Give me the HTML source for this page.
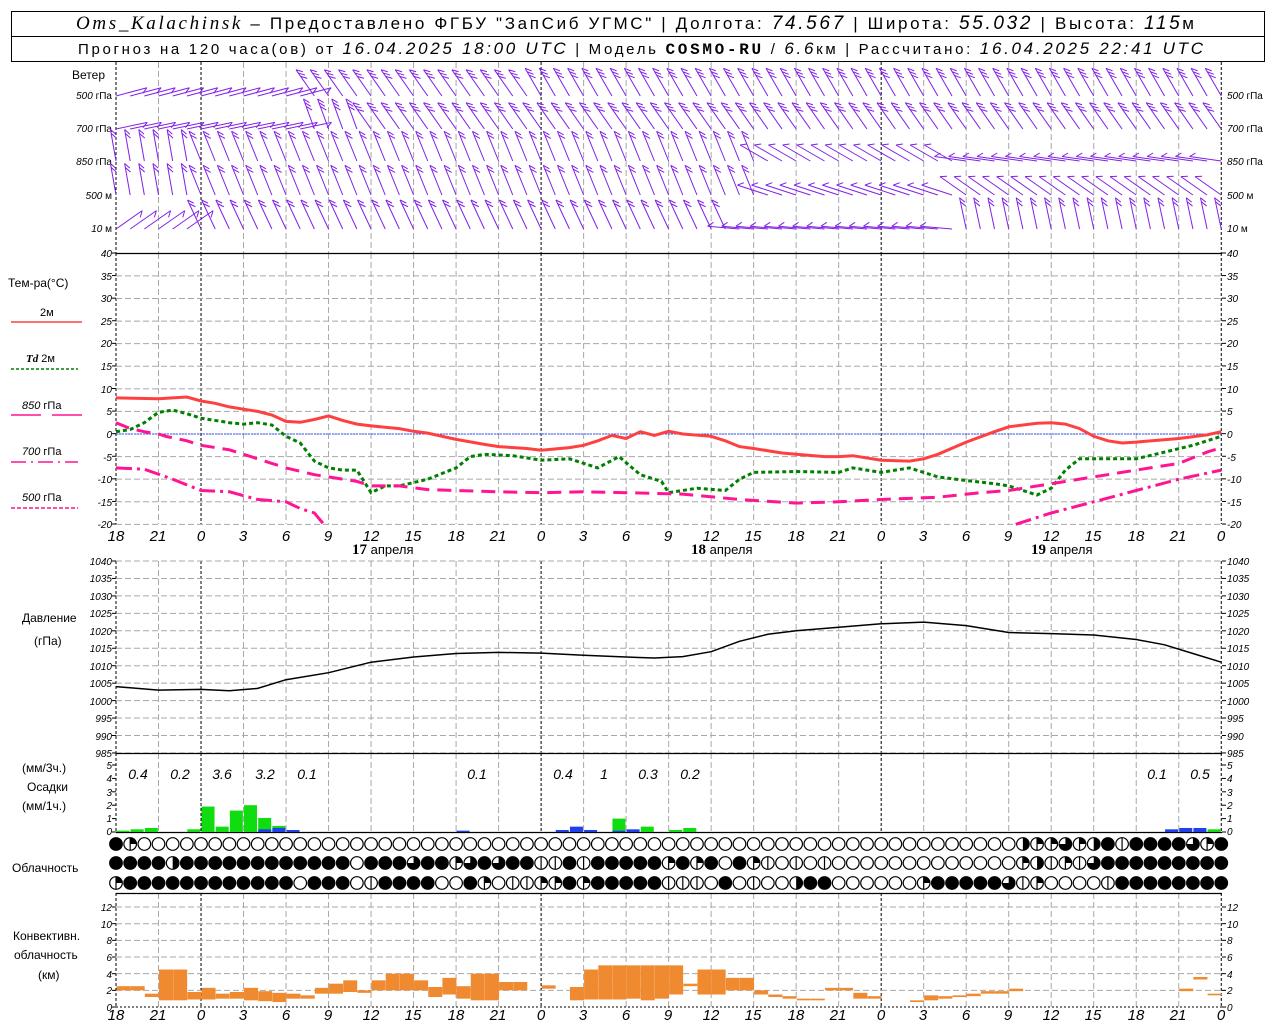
<!DOCTYPE html>
<html><head><meta charset="utf-8"><style>
html,body{margin:0;padding:0;background:#fff;width:1280px;height:1024px;overflow:hidden}
svg{display:block}
text{font-family:"Liberation Sans",sans-serif;fill:#000}
.ax{font-size:10px;font-style:italic}
.lb{font-size:12px}
.xl{font-size:15px;font-style:italic}
</style></head><body>
<svg id="s" width="1280" height="1024" viewBox="0 0 1280 1024" xmlns="http://www.w3.org/2000/svg">
<rect x="11.5" y="11.5" width="1253" height="50" fill="none" stroke="#000"/>
<line x1="11" y1="36.5" x2="1265" y2="36.5" stroke="#000"/>
<text x="76" y="29" font-size="17" textLength="1118" lengthAdjust="spacing"><tspan font-family="Liberation Serif" font-style="italic" font-size="19">Oms_Kalachinsk</tspan> – Предоставлено ФГБУ "ЗапСиб УГМС" | Долгота: <tspan font-style="italic" font-size="19">74.567</tspan> | Широта: <tspan font-style="italic" font-size="19">55.032</tspan> | Высота: <tspan font-style="italic" font-size="19">115</tspan>м</text>
<text x="78" y="54" font-size="15" textLength="1125" lengthAdjust="spacing">Прогноз на 120 часа(ов) от <tspan font-style="italic" font-size="17">16.04.2025 18:00 UTC</tspan> | Модель <tspan font-family="Liberation Mono" font-weight="bold" font-size="16">COSMO-RU</tspan> / <tspan font-style="italic" font-size="17">6.6</tspan>км | Рассчитано: <tspan font-style="italic" font-size="17">16.04.2025 22:41 UTC</tspan></text>

<g class="lb">
<text x="72" y="79">Ветер</text>
<text x="112" y="99" text-anchor="end" font-size="10"><tspan font-style="italic">500</tspan> гПа</text>
<text x="112" y="132" text-anchor="end" font-size="10"><tspan font-style="italic">700</tspan> гПа</text>
<text x="112" y="165" text-anchor="end" font-size="10"><tspan font-style="italic">850</tspan> гПа</text>
<text x="112" y="199" text-anchor="end" font-size="10"><tspan font-style="italic">500</tspan> м</text>
<text x="112" y="232" text-anchor="end" font-size="10"><tspan font-style="italic">10</tspan>   м</text>
<text x="1227" y="99" font-size="10"><tspan font-style="italic">500</tspan> гПа</text>
<text x="1227" y="132" font-size="10"><tspan font-style="italic">700</tspan> гПа</text>
<text x="1227" y="165" font-size="10"><tspan font-style="italic">850</tspan> гПа</text>
<text x="1227" y="199" font-size="10"><tspan font-style="italic">500</tspan> м</text>
<text x="1227" y="232" font-size="10"><tspan font-style="italic">10</tspan>   м</text>
<text x="8" y="287">Тем-ра(°С)</text>
<text x="40" y="316" font-size="11">2м</text>
<text x="26" y="362" font-size="11"><tspan font-style="italic" font-weight="bold" font-family="Liberation Serif">Td</tspan>  2м</text>
<text x="22" y="409" font-size="11"><tspan font-style="italic">850</tspan>  гПа</text>
<text x="22" y="455" font-size="11"><tspan font-style="italic">700</tspan>  гПа</text>
<text x="22" y="501" font-size="11"><tspan font-style="italic">500</tspan>  гПа</text>
<text x="22" y="622">Давление</text>
<text x="34" y="645">(гПа)</text>
<text x="22" y="772">(мм/3ч.)</text>
<text x="27" y="791">Осадки</text>
<text x="22" y="810">(мм/1ч.)</text>
<text x="12" y="872">Облачность</text>
<text x="13" y="940">Конвективн.</text>
<text x="14" y="959">облачность</text>
<text x="38" y="979">(км)</text>
<text x="352" y="554" font-size="13"><tspan font-weight="bold" font-family="Liberation Serif" font-size="15">17</tspan> апреля</text>
<text x="691" y="554" font-size="13"><tspan font-weight="bold" font-family="Liberation Serif" font-size="15">18</tspan> апреля</text>
<text x="1031" y="554" font-size="13"><tspan font-weight="bold" font-family="Liberation Serif" font-size="15">19</tspan> апреля</text>
</g>
<g stroke-width="1.5">
<line x1="11" y1="322" x2="82" y2="322" stroke="#ff4040"/>
<line x1="11" y1="369" x2="78" y2="369" stroke="#008000" stroke-dasharray="3,2"/>
<line x1="11" y1="415" x2="41" y2="415" stroke="#ff1493"/><line x1="52" y1="415" x2="82" y2="415" stroke="#ff1493"/>
<line x1="11" y1="462" x2="78" y2="462" stroke="#ff1493" stroke-dasharray="15,5,2,5"/>
<line x1="11" y1="508" x2="78" y2="508" stroke="#ff1493" stroke-dasharray="4,2"/>
</g>
<g id="g"></g>
<g class="ax">
<text x="112" y="257" text-anchor="end">40</text><text x="112" y="280" text-anchor="end">35</text><text x="112" y="302" text-anchor="end">30</text><text x="112" y="325" text-anchor="end">25</text><text x="112" y="347" text-anchor="end">20</text><text x="112" y="370" text-anchor="end">15</text><text x="112" y="393" text-anchor="end">10</text><text x="112" y="415" text-anchor="end">5</text><text x="112" y="438" text-anchor="end">0</text><text x="112" y="461" text-anchor="end">-5</text><text x="112" y="483" text-anchor="end">-10</text><text x="112" y="506" text-anchor="end">-15</text><text x="112" y="528" text-anchor="end">-20</text>
<text x="1227" y="257">40</text><text x="1227" y="280">35</text><text x="1227" y="302">30</text><text x="1227" y="325">25</text><text x="1227" y="347">20</text><text x="1227" y="370">15</text><text x="1227" y="393">10</text><text x="1227" y="415">5</text><text x="1227" y="438">0</text><text x="1227" y="461">-5</text><text x="1227" y="483">-10</text><text x="1227" y="506">-15</text><text x="1227" y="528">-20</text>
<text x="112" y="565" text-anchor="end">1040</text><text x="112" y="582" text-anchor="end">1035</text><text x="112" y="600" text-anchor="end">1030</text><text x="112" y="617" text-anchor="end">1025</text><text x="112" y="635" text-anchor="end">1020</text><text x="112" y="652" text-anchor="end">1015</text><text x="112" y="670" text-anchor="end">1010</text><text x="112" y="687" text-anchor="end">1005</text><text x="112" y="705" text-anchor="end">1000</text><text x="112" y="722" text-anchor="end">995</text><text x="112" y="740" text-anchor="end">990</text><text x="112" y="757" text-anchor="end">985</text>
<text x="1227" y="565">1040</text><text x="1227" y="582">1035</text><text x="1227" y="600">1030</text><text x="1227" y="617">1025</text><text x="1227" y="635">1020</text><text x="1227" y="652">1015</text><text x="1227" y="670">1010</text><text x="1227" y="687">1005</text><text x="1227" y="705">1000</text><text x="1227" y="722">995</text><text x="1227" y="740">990</text><text x="1227" y="757">985</text>
<text x="112" y="769" text-anchor="end">5</text><text x="112" y="782" text-anchor="end">4</text><text x="112" y="796" text-anchor="end">3</text><text x="112" y="809" text-anchor="end">2</text><text x="112" y="822" text-anchor="end">1</text><text x="112" y="835" text-anchor="end">0</text>
<text x="1227" y="769">5</text><text x="1227" y="782">4</text><text x="1227" y="796">3</text><text x="1227" y="809">2</text><text x="1227" y="822">1</text><text x="1227" y="835">0</text>
<text x="112" y="911" text-anchor="end">12</text><text x="112" y="928" text-anchor="end">10</text><text x="112" y="944" text-anchor="end">8</text><text x="112" y="961" text-anchor="end">6</text><text x="112" y="978" text-anchor="end">4</text><text x="112" y="994" text-anchor="end">2</text><text x="112" y="1011" text-anchor="end">0</text>
<text x="1227" y="911">12</text><text x="1227" y="928">10</text><text x="1227" y="944">8</text><text x="1227" y="961">6</text><text x="1227" y="978">4</text><text x="1227" y="994">2</text><text x="1227" y="1011">0</text>
</g>
<g class="xl" text-anchor="middle">
<text x="116" y="541">18</text><text x="158" y="541">21</text><text x="201" y="541">0</text><text x="243" y="541">3</text><text x="286" y="541">6</text><text x="328" y="541">9</text><text x="371" y="541">12</text><text x="413" y="541">15</text><text x="456" y="541">18</text><text x="498" y="541">21</text><text x="541" y="541">0</text><text x="583" y="541">3</text><text x="626" y="541">6</text><text x="668" y="541">9</text><text x="711" y="541">12</text><text x="753" y="541">15</text><text x="796" y="541">18</text><text x="838" y="541">21</text><text x="881" y="541">0</text><text x="923" y="541">3</text><text x="966" y="541">6</text><text x="1008" y="541">9</text><text x="1051" y="541">12</text><text x="1093" y="541">15</text><text x="1136" y="541">18</text><text x="1178" y="541">21</text><text x="1221" y="541">0</text>
<text x="116" y="1020">18</text><text x="158" y="1020">21</text><text x="201" y="1020">0</text><text x="243" y="1020">3</text><text x="286" y="1020">6</text><text x="328" y="1020">9</text><text x="371" y="1020">12</text><text x="413" y="1020">15</text><text x="456" y="1020">18</text><text x="498" y="1020">21</text><text x="541" y="1020">0</text><text x="583" y="1020">3</text><text x="626" y="1020">6</text><text x="668" y="1020">9</text><text x="711" y="1020">12</text><text x="753" y="1020">15</text><text x="796" y="1020">18</text><text x="838" y="1020">21</text><text x="881" y="1020">0</text><text x="923" y="1020">3</text><text x="966" y="1020">6</text><text x="1008" y="1020">9</text><text x="1051" y="1020">12</text><text x="1093" y="1020">15</text><text x="1136" y="1020">18</text><text x="1178" y="1020">21</text><text x="1221" y="1020">0</text>
</g>
<g font-size="14" font-style="italic" text-anchor="middle">
<text x="138" y="779">0.4</text><text x="180" y="779">0.2</text><text x="222" y="779">3.6</text><text x="265" y="779">3.2</text><text x="307" y="779">0.1</text><text x="477" y="779">0.1</text><text x="563" y="779">0.4</text><text x="604" y="779">1</text><text x="648" y="779">0.3</text><text x="690" y="779">0.2</text><text x="1157" y="779">0.1</text><text x="1200" y="779">0.5</text>
</g>
</svg>
<script>
var NS="http://www.w3.org/2000/svg",G=document.getElementById("g");
function el(n,a){var e=document.createElementNS(NS,n);for(var k in a)e.setAttribute(k,a[k]);G.appendChild(e);return e;}
function X(h){return 116+h*14.17;}
function ln(x1,y1,x2,y2,c,w,d){var a={x1:x1,y1:y1,x2:x2,y2:y2,stroke:c,"stroke-width":w||1};if(d)a["stroke-dasharray"]=d;el("line",a);}
var GR="#a8a8a8";
function vgrid(y1,y2){for(var h=0;h<=78;h+=3){var day=(h-6)%24==0;ln(X(h),y1,X(h),y2,day||h==0||h==78?"#000":GR,1,day||h==0||h==78?"3,2":"6,3");}}
vgrid(62,253);vgrid(253,524);vgrid(561,753);vgrid(753,832);vgrid(893,1007);
for(var t=-20;t<=35;t+=5){var y=434-t*4.517;ln(116,y,1222,y,GR,1,"6,3");}
for(var p=985;p<=1040;p+=5){var y=561+(1040-p)*3.49;ln(116,y,1222,y,GR,1,"6,3");}
for(var k=1;k<=6;k++){var y=1007-k*2*8.33;ln(116,y,1222,y,GR,1,"6,3");}
ln(116,1007,1222,1007,"#000",1,"2,2");
ln(116,253.5,1222,253.5,"#000",1.3);ln(116,753.5,1222,753.5,"#000",1.3);ln(116,832.5,1222,832.5,"#000",1.3);ln(116,893.5,1222,893.5,"#000",1.3);
ln(116,434,1222,434,"#3050ff",1,"2,1");
[[253,524,22.585],[561,753,17.45],[765,832,13.4],[907,1007,16.67]].forEach(function(r){for(var y=r[0];y<=r[1]+1;y+=r[2]){ln(112,y,116,y,"#000");ln(1222,y,1226,y,"#000");}});
function path(pts,c,w,d){var s="";pts.forEach(function(p,i){s+=(i?"L":"M")+X(p[0]).toFixed(1)+","+p[1].toFixed(1);});var a={d:s,fill:"none",stroke:c,"stroke-width":w};if(d)a["stroke-dasharray"]=d;el("path",a);}
function T(a){return a.map(function(p){return [p[0],434-p[1]*4.517];});}
path(T([[0,8],[3,7.8],[4,8],[5,8.2],[6,7.3],[7,6.8],[8,6],[9,5.5],[10,5],[11,4.2],[12,2.8],[13,2.6],[14,3.2],[15,4],[16,3],[17,2.2],[18,1.8],[20,1.2],[21,0.6],[22,0.2],[24,-1.2],[26,-2.3],[27,-2.8],[29,-3.2],[30,-3.6],[32,-3],[33,-2.5],[34,-1.5],[35,-0.3],[36,-1],[37,0.5],[38,-0.3],[39,0.6],[40,0],[42,-0.5],[43,-1.5],[44,-2.8],[45,-3.2],[47,-4.2],[48,-4.5],[50,-5],[51,-5],[52,-4.8],[54,-5.8],[56,-6],[57,-5.5],[58,-4.5],[60,-1.8],[62,0.5],[63,1.6],[65,2.4],[66,2.5],[67,2.2],[68,1.2],[69,-0.5],[70,-1.5],[71,-2],[72,-1.8],[75,-1],[77,-0.2],[78,0.5]]),"#ff4040",3);
path(T([[0,0.5],[1,1],[2,2.5],[3,4.8],[4,5.3],[5,4.5],[6,3.5],[8,2.5],[9,2.2],[10,2.5],[11,2],[12,-0.5],[13,-2],[14,-6],[15,-7.5],[16,-8],[17,-8],[18,-13],[19,-11.5],[20,-11.5],[22,-10],[24,-7.5],[25,-5],[26,-4.5],[28,-4.8],[30,-5.8],[32,-5.5],[34,-7.5],[35.5,-5],[37,-9],[38.5,-10.5],[39,-13],[41,-12],[43,-12.5],[44,-10],[45,-8.5],[48,-8.3],[51,-8.5],[52,-7.5],[54,-8.5],[56,-7.5],[58,-9.5],[60,-10.3],[62,-11],[63,-11.5],[65,-13.5],[66,-12],[67,-8],[68,-5.5],[72,-5.5],[74,-4],[76,-2.5],[78,-0.5]]),"#008000",3,"4,3");
path(T([[0,2.5],[1,1.2],[2,0.5],[3,0],[3.5,-0.5],[5,-1.5],[6,-2.5],[8,-3.5],[9,-4.5],[11,-6.5],[12,-7.5],[14,-9],[15,-9.5],[16,-10],[17,-10.5],[18,-11.5],[20,-11.5],[22,-12.3],[24,-12.5],[27,-12.8],[30,-13],[33,-12.8],[36,-13],[40,-13.3],[44,-14.5],[48,-15.3],[51,-15],[54,-14.5],[58,-14],[61,-13],[63,-12.5],[66,-11],[69,-9.5],[72,-8],[75,-6.5],[77,-4],[78,-3]]),"#ff1493",3,"14,8");
path(T([[0,-7.5],[2,-7.8],[4,-10],[6,-12.5],[8,-12.8],[10,-14.5],[12,-15],[13,-16.5],[14,-17.5],[14.8,-20.5]]),"#ff1493",3,"16,5,3,5");
path(T([[63.5,-20],[66,-17.5],[69,-15],[72,-12.5],[75,-10],[78,-8]]),"#ff1493",3,"16,5,3,5");
var P=[[0,1004],[3,1003],[6,1003.2],[8,1002.8],[10,1003.5],[12,1006],[15,1008],[18,1011],[21,1012.5],[24,1013.5],[27,1013.8],[30,1013.6],[33,1013],[36,1012.5],[38,1012.2],[40,1012.6],[42,1014],[44,1017],[46,1019],[48,1020],[51,1021],[54,1022],[57,1022.5],[60,1021.5],[63,1019.5],[66,1019.2],[69,1018.8],[72,1017.5],[74,1016],[76,1013.5],[78,1011]];
path(P.map(function(p){return [p[0],561+(1040-p[1])*3.49];}),"#000",1.5);
function bar(h,v,c){var y0=832;el("rect",{x:X(h)+0.5,y:y0-v*13.4,width:13,height:v*13.4,fill:c});}
var GRN="#10dd10",BL="#2040ee";
[[0,0.1],[1,0.2],[2,0.3],[5,0.2],[6,1.9],[7,0.4],[8,1.6],[9,2.0],[10,1.05],[11,0.45],[35,1.0],[37,0.4],[39,0.15],[40,0.3],[77,0.2]].forEach(function(b){bar(b[0],b[1],GRN);});
[[10,0.2],[11,0.3],[12,0.15],[24,0.1],[31,0.15],[32,0.4],[33,0.15],[35,0.1],[36,0.2],[74,0.2],[75,0.3],[76,0.3]].forEach(function(b){bar(b[0],b[1],BL);});
var R=["FQ"+"E".repeat(62)+"HQQTQHFLFFFFTQF",
"FFFFH"+"F".repeat(12)+"EFFFTFFQTFTFFLLFLFFFFF"+"QFQFEFQLELEL"+"E".repeat(13)+"QHLQLT"+"F".repeat(9),
"Q"+"F".repeat(12)+"EFFFELFFFFEEFQELLQQFQFFFF"+"FLLLEFELEEHFF"+"E".repeat(6)+"Q"+"F".repeat(5)+"TLQ"+"EEEE"+"L"+"F".repeat(8)];
var CY=[844,863,883];
R.forEach(function(s,r){for(var i=0;i<79;i++){var c=s[i]||"E",x=X(i),y=CY[r],rr=6.3;
el("circle",{cx:x,cy:y,r:rr,fill:c=="F"?"#000":"#fff",stroke:"#000","stroke-width":1.2});
if(c=="H")el("path",{d:"M"+x+","+(y-rr)+"A"+rr+","+rr+" 0 0 1 "+x+","+(y+rr)+"Z",fill:"#000"});
if(c=="Q")el("path",{d:"M"+x+","+y+"L"+x+","+(y-rr)+"A"+rr+","+rr+" 0 0 1 "+(x+rr)+","+y+"Z",fill:"#000"});
if(c=="T")el("path",{d:"M"+x+","+y+"L"+x+","+(y-rr)+"A"+rr+","+rr+" 0 1 1 "+(x-rr)+","+y+"Z",fill:"#000"});
if(c=="L"||c=="Q")ln(x,y-rr,x,y+rr,"#000",1.2);}});
var O="#f08a30";
[[0,2,2.5],[1,2,2.5],[2,1.2,1.6],[3,0.8,4.5],[4,0.8,4.5],[5,0.9,1.8],[6,0.9,2.3],[7,1.0,1.6],[8,1.0,1.8],[9,0.8,2.3],[10,0.7,1.9],[11,0.6,1.7],[12,1.0,1.6],[13,1.0,1.4],[14,1.6,2.3],[15,1.6,2.8],[16,1.8,3.2],[17,1.7,2.0],[18,2.0,3.2],[19,2.0,4.0],[20,2.0,4.0],[21,2.0,3.2],[22,1.2,2.4],[23,1.5,3.5],[24,1.0,2.5],[25,0.8,4.0],[26,0.8,4.0],[27,2.0,3.0],[28,2.0,3.0],[30,2.2,2.6],[32,0.8,2.4],[33,0.9,4.5],[34,0.9,5.0],[35,0.9,5.0],[36,1.0,5.0],[37,0.8,5.0],[38,1.0,5.0],[39,1.5,5.0],[40,2.5,2.8],[41,1.5,4.5],[42,1.5,4.5],[43,2.0,3.5],[44,2.0,3.5],[45,1.5,2.0],[46,1.2,1.5],[47,1.0,1.3],[48,0.8,1.0],[49,0.8,1.0],[50,2.0,2.3],[51,2.0,2.3],[52,1.0,1.7],[53,1.0,1.3],[56,0.6,0.8],[57,0.8,1.4],[58,1.0,1.3],[59,1.2,1.4],[60,1.3,1.6],[61,1.6,1.9],[62,1.6,1.9],[63,1.9,2.2],[75,1.9,2.2],[76,3.3,3.6],[77,1.4,1.6]].forEach(function(b){el("rect",{x:X(b[0])+0.5,y:1007-b[2]*8.33,width:14,height:(b[2]-b[1])*8.33,fill:O});});
var WC="#8020e8",LV=[96,129,161,195,229];
function ang(l,h){
 if(l==0)return h<14?75:(h<30?-35:-30);
 if(l==1)return h<14?78:(h<18?-20:-35);
 if(l==2)return h<6?-10:(h<46?-22:(h<60?-60:-82));
 if(l==3)return h<6?-10:(h<46?-22:(h<60?-72:-55));
 return h<6?55:(h<44?-25:(h<60?-85:-12));}
for(var l=0;l<5;l++)for(var h=0;h<=78;h++){var A=ang(l,h),a=A*Math.PI/180,L=32,x=X(h),y=LV[l];
 var dx=Math.sin(a)*L,dy=-Math.cos(a)*L,tx=x+dx,ty=y+dy;ln(x,y,tx,ty,WC,1);
 var ux=dx/L,uy=dy/L,n=(l<2?3:2);if(Math.abs(A)>50)n=1;
 var px=Math.cos(a+0.9)*7,py=Math.sin(a+0.9)*7;
 for(var k=0;k<n;k++){var bx=tx-ux*k*4,by=ty-uy*k*4;ln(bx,by,bx+px,by+py,WC,1);}}
</script>
</body></html>
